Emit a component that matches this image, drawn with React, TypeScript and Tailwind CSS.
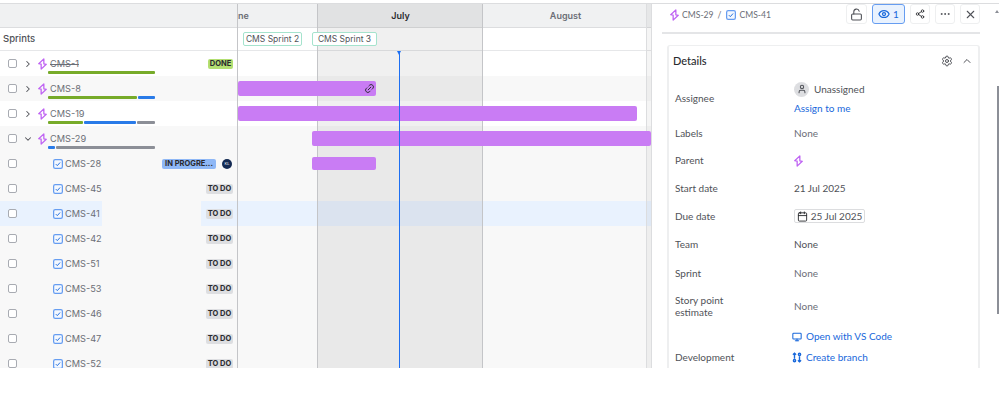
import { Calendar, ChevronDown, ChevronRight, ChevronUp, Ellipsis, Eye, Link2, LockOpen, Monitor, Settings, Share2, User, X } from "lucide-react";

type Row = {
  key: string;
  child?: boolean;
  open?: boolean;
  done?: boolean;
  status?: "done" | "progress" | "todo";
  progress?: [string, number][];
};

const GREEN = "bg-[#77ab2a]";
const BLUE = "bg-[#2a7be8]";
const GRAY = "bg-[#8c8f97]";

const ROWS: Row[] = [
  { key: "CMS-1", done: true, status: "done", progress: [[GREEN, 107]] },
  { key: "CMS-8", progress: [[GREEN, 89], [BLUE, 17]] },
  { key: "CMS-19", progress: [[GREEN, 35], [BLUE, 52], [GRAY, 18]] },
  { key: "CMS-29", open: true, progress: [[BLUE, 7], [GRAY, 99]] },
  { key: "CMS-28", child: true, status: "progress" },
  { key: "CMS-45", child: true, status: "todo" },
  { key: "CMS-41", child: true, status: "todo" },
  { key: "CMS-42", child: true, status: "todo" },
  { key: "CMS-51", child: true, status: "todo" },
  { key: "CMS-53", child: true, status: "todo" },
  { key: "CMS-46", child: true, status: "todo" },
  { key: "CMS-47", child: true, status: "todo" },
  { key: "CMS-52", child: true, status: "todo" },
];

function rowBg(idx: number) {
  if (idx === 0 || idx === 2) return "bg-white";
  return "bg-[#f8f8f8]";
}

function EpicIcon({ height = 12 }: { height?: number }) {
  return (
    <svg width={height * 0.75} height={height} viewBox="2 0 12 16" fill="none" className="shrink-0">
      <path d="M9.8 1.2 3 7.6l3.2.6L6.2 14.8 13 8.4l-3.2-.6z" stroke="#bf63f3" strokeWidth="1.7" strokeLinejoin="round" />
    </svg>
  );
}

function TaskIcon({ size = 10 }: { size?: number }) {
  return (
    <svg width={size} height={size} viewBox="0 0 16 16" fill="none" className="shrink-0">
      <rect x="1" y="1" width="14" height="14" rx="2.5" fill="#f4f8fe" stroke="#669df1" strokeWidth="2" />
      <path d="m4.5 8.2 2.4 2.4 4.4-5" stroke="#1868db" strokeWidth="1.5" />
    </svg>
  );
}

function BranchIcon() {
  return (
    <svg width={10} height={11} viewBox="0 0 16 16" fill="none" stroke="currentColor" strokeWidth="2.2" className="shrink-0">
      <path d="M4 1v9M12 6v9" />
      <path d="M1.5 3.5 4 1l2.5 2.5M9.5 12.5 12 15l2.5-2.5" />
      <circle cx="4" cy="13" r="1.8" />
      <circle cx="12" cy="3" r="1.8" />
    </svg>
  );
}

function Badge({ status }: { status: NonNullable<Row["status"]> }) {
  if (status === "done")
    return <span className="h-[10px] w-[25px] rounded-[2px] bg-[#b3df72] text-center text-[7.5px] leading-[10px] font-bold text-[#292a2e]">DONE</span>;
  if (status === "progress")
    return <span className="h-[10px] w-[54px] rounded-[2px] bg-[#8fb8f6] text-center text-[7.5px] leading-[10px] font-bold text-[#292a2e]">IN PROGRE...</span>;
  return <span className="h-[10px] w-[27px] rounded-[2px] bg-[#dddee1] text-center text-[7.5px] leading-[10px] font-bold text-[#292a2e]">TO DO</span>;
}

function LeftRow({ row, idx }: { row: Row; idx: number }) {
  const selected = row.key === "CMS-41";
  return (
    <div className={`relative flex h-[25px] items-center ${rowBg(idx)}`}>
      {selected && <div className="absolute inset-y-0 left-0 w-[102px] bg-[#e9f2fe]" />}
      {selected && <div className="absolute inset-y-0 left-[201px] w-[36px] bg-[#e9f2fe]" />}
      <span className="relative ml-[8px] h-[9px] w-[9px] shrink-0 rounded-[2px] border border-[#a8abb2] bg-white" />
      {row.child ? (
        <span className="relative mr-[2px] ml-[36px]">
          <TaskIcon />
        </span>
      ) : (
        <>
          <span className="relative flex w-[21px] justify-center pl-px text-[#505258]">
            {row.open ? <ChevronDown size={10} strokeWidth={2.5} /> : <ChevronRight size={10} strokeWidth={2.5} />}
          </span>
          <EpicIcon />
          <span className="w-[3px]" />
        </>
      )}
      <span className={`relative text-[9.2px] text-[#6b6e76] ${row.done ? "line-through" : ""}`}>{row.key}</span>
      {row.progress && (
        <div className="absolute top-[20px] left-[48px] flex gap-[1px]">
          {row.progress.map(([color, width], i) => (
            <div key={i} className={`h-[2.5px] rounded-[1px] ${color}`} style={{ width }} />
          ))}
        </div>
      )}
      {row.status && (
        <div className="absolute inset-y-0 right-[4px] flex items-center">
          <Badge status={row.status} />
          {row.status === "progress" && (
            <span className="mr-[1px] ml-[6px] h-[10px] w-[10px] rounded-full bg-[#132a53] text-center text-[4px] leading-[10px] text-white">KL</span>
          )}
        </div>
      )}
    </div>
  );
}

function Bar({ left, width, small, link }: { left: number; width: number; small?: boolean; link?: boolean }) {
  return (
    <div
      className={`absolute z-10 flex items-center justify-end rounded-[2px] bg-[#c97cf4] pr-[1px] ${small ? "top-[6px] h-[13px]" : "top-[5px] h-[15px]"}`}
      style={{ left, width }}
    >
      {link && <Link2 size={11} className="-rotate-45 text-[#292a2e]" />}
    </div>
  );
}

function Timeline() {
  const bars: Record<number, React.ReactNode> = {
    1: <Bar left={0} width={138} link />,
    2: <Bar left={0} width={399} />,
    3: <Bar left={74} width={339} />,
    4: <Bar left={74} width={64} small />,
  };
  return (
    <div className="relative h-full w-[414px] shrink-0 overflow-hidden border-r border-[#dcdddf]">
      <div className="flex h-[24px] items-center border-b border-[#dcdddf] bg-[#f0f1f2] text-[9px] font-semibold text-[#6b6e76]">
        <span className="w-[80px]">ne</span>
        <span className="relative z-10 w-[165px] text-center text-[#292a2e]">July</span>
        <span className="w-[165px] text-center">August</span>
      </div>
      <div className="relative flex h-[23px] items-center border-b border-[#e6e7e9] bg-white pl-[5px]">
        <span className="relative z-10 h-[14px] w-[59px] rounded-[2px] border border-[#a5e3cd] bg-white text-center text-[8.5px] leading-[12px] text-[#505258]">CMS Sprint 2</span>
        <span className="relative z-10 ml-[10px] h-[14px] w-[65px] rounded-[2px] border border-[#a5e3cd] bg-white text-center text-[8.5px] leading-[12px] text-[#505258]">CMS Sprint 3</span>
      </div>
      {ROWS.map((row, idx) => (
        <div key={row.key} className={`relative h-[25px] ${row.key === "CMS-41" ? "bg-[#e9f2fe]" : rowBg(idx)}`}>
          {bars[idx]}
        </div>
      ))}
      {/* current month shade */}
      <div className="absolute inset-y-0 left-[79px] w-[166px] border-x border-[#c4c5c8] bg-black/[0.06]" />
      {/* right gutter */}
      <div className="absolute inset-y-0 right-0 w-[5px] border-l border-[#dcdddf] bg-black/[0.04]" />
      {/* today marker */}
      <div className="absolute top-[47px] bottom-0 left-[161px] z-20 w-[1px] bg-[#1d6ff2]" />
      <div className="absolute top-[47px] left-[159px] z-20 h-0 w-0 border-x-[2.5px] border-t-[4px] border-x-transparent border-t-[#1d6ff2]" />
    </div>
  );
}

function Field({ label, height, children, multi }: { label?: string; height: number; children?: React.ReactNode; multi?: boolean }) {
  return (
    <div className="flex items-center pl-[6px]" style={{ height }}>
      <div className="w-[119px] shrink-0 text-[#505258]">
        <div className={multi ? "max-w-[70px] leading-[12px]" : ""}>{label}</div>
      </div>
      <div className="min-w-0">{children}</div>
    </div>
  );
}

function IconButton({ children, className = "w-[21px] border-[#eeeff0] bg-white text-[#505258]" }: { children: React.ReactNode; className?: string }) {
  return <div className={`flex h-[20px] items-center justify-center rounded-[3px] border ${className}`}>{children}</div>;
}

function DetailPanel() {
  return (
    <div className="relative h-full flex-1 overflow-hidden pl-[10px] font-['Lato',sans-serif] text-[10px] text-[#505258]">
      <div className="mr-[19px] flex h-[30px] items-start border-b-2 border-[#e4e5e7]">
        <div className="ml-[8px] flex h-[22px] items-center text-[8.6px] text-[#6b6e76]">
          <EpicIcon height={12} />
          <span className="ml-[3px]">CMS-29</span>
          <span className="ml-[4px]">/</span>
          <span className="ml-[5px]">
            <TaskIcon />
          </span>
          <span className="ml-[3px]">CMS-41</span>
        </div>
        <div className="ml-auto flex gap-[5px]">
          <IconButton>
            <LockOpen size={13} />
          </IconButton>
          <IconButton className="w-[33px] gap-[3px] border-[#669df1] bg-[#e9f2fe] text-[#1868db]">
            <Eye size={12} strokeWidth={2.5} />
            <span className="text-[10px]">1</span>
          </IconButton>
          <IconButton className="w-[20px] border-[#eeeff0] bg-white text-[#292a2e]">
            <Share2 size={10} />
          </IconButton>
          <IconButton className="w-[20px] border-[#eeeff0] bg-white text-[#505258]">
            <Ellipsis size={12} />
          </IconButton>
          <IconButton className="w-[20px] border-[#eeeff0] bg-white text-[#505258]">
            <X size={13} />
          </IconButton>
        </div>
      </div>
      <div className="mt-[11px] mr-[19px] ml-[5px] h-[330px] rounded-t-[3px] border-x-2 border-t border-[#eeeff0]">
        <div className="flex h-[31px] items-center justify-between pr-[5px] pl-[4px]">
          <span className="pb-[1px] text-[11px] font-medium text-[#292a2e]">Details</span>
          <div className="flex items-center gap-[8px] pb-[1px] text-[#505258]">
            <Settings size={12} />
            <ChevronUp size={12} />
          </div>
        </div>
        <Field label="Assignee" height={42}>
          <div className="flex items-center gap-[5px]">
            <span className="flex h-[15px] w-[15px] items-center justify-center rounded-full bg-[#dddee1] text-[#505258]">
              <User size={10} strokeWidth={2.5} />
            </span>
            <span>Unassigned</span>
          </div>
          <div className="mt-[5px] leading-[13px] text-[#1868db]">Assign to me</div>
        </Field>
        <Field label="Labels" height={28}>
          <span className="text-[#6b6e76]">None</span>
        </Field>
        <Field label="Parent" height={27}>
          <EpicIcon height={12} />
        </Field>
        <Field label="Start date" height={28}>
          21 Jul 2025
        </Field>
        <Field label="Due date" height={28}>
          <span className="flex h-[14px] w-[71px] items-center justify-center gap-[3px] rounded-[2px] border border-[#dcdddf] bg-white">
            <Calendar size={11} className="text-[#292a2e]" />
            25 Jul 2025
          </span>
        </Field>
        <Field label="Team" height={29}>
          None
        </Field>
        <Field label="Sprint" height={28}>
          <span className="text-[#6b6e76]">None</span>
        </Field>
        <Field label="Story point estimate" height={38} multi>
          <span className="text-[#6b6e76]">None</span>
        </Field>
        <Field height={23}>
          <span className="-ml-[2px] flex items-center gap-[4px] text-[#1868db]">
            <Monitor size={10} strokeWidth={2.5} />
            Open with VS Code
          </span>
        </Field>
        <Field label="Development" height={18}>
          <span className="-ml-[2px] flex items-center gap-[4px] text-[#1868db]">
            <BranchIcon />
            Create branch
          </span>
        </Field>
      </div>
      {/* scrollbar */}
      <div className="absolute top-[82px] right-0 h-[228px] w-[2px] bg-[#8c8f97]" />
      <div className="absolute top-[6px] right-0 h-0 w-0 border-x-[2px] border-b-[3px] border-x-transparent border-b-[#8c8f97]" />
    </div>
  );
}

export default function App() {
  return (
    <div className="h-[406px] w-[999px] overflow-hidden bg-white font-['Inter',sans-serif]">
      <div className="mt-[3px] flex h-[365px] border-t border-[#dcdddf]">
        <div className="w-[237px] shrink-0 overflow-hidden">
          <div className="h-[24px] border-b border-[#dcdddf] bg-[#f0f1f2]" />
          <div className="flex h-[23px] items-center border-b border-[#e6e7e9] pl-[3px] text-[9.5px] font-medium text-[#505258]">Sprints</div>
          {ROWS.map((row, idx) => (
            <LeftRow key={row.key} row={row} idx={idx} />
          ))}
        </div>
        <div className="w-[1px] shrink-0 bg-[#c4c5c8]" />
        <Timeline />
        <DetailPanel />
      </div>
    </div>
  );
}
